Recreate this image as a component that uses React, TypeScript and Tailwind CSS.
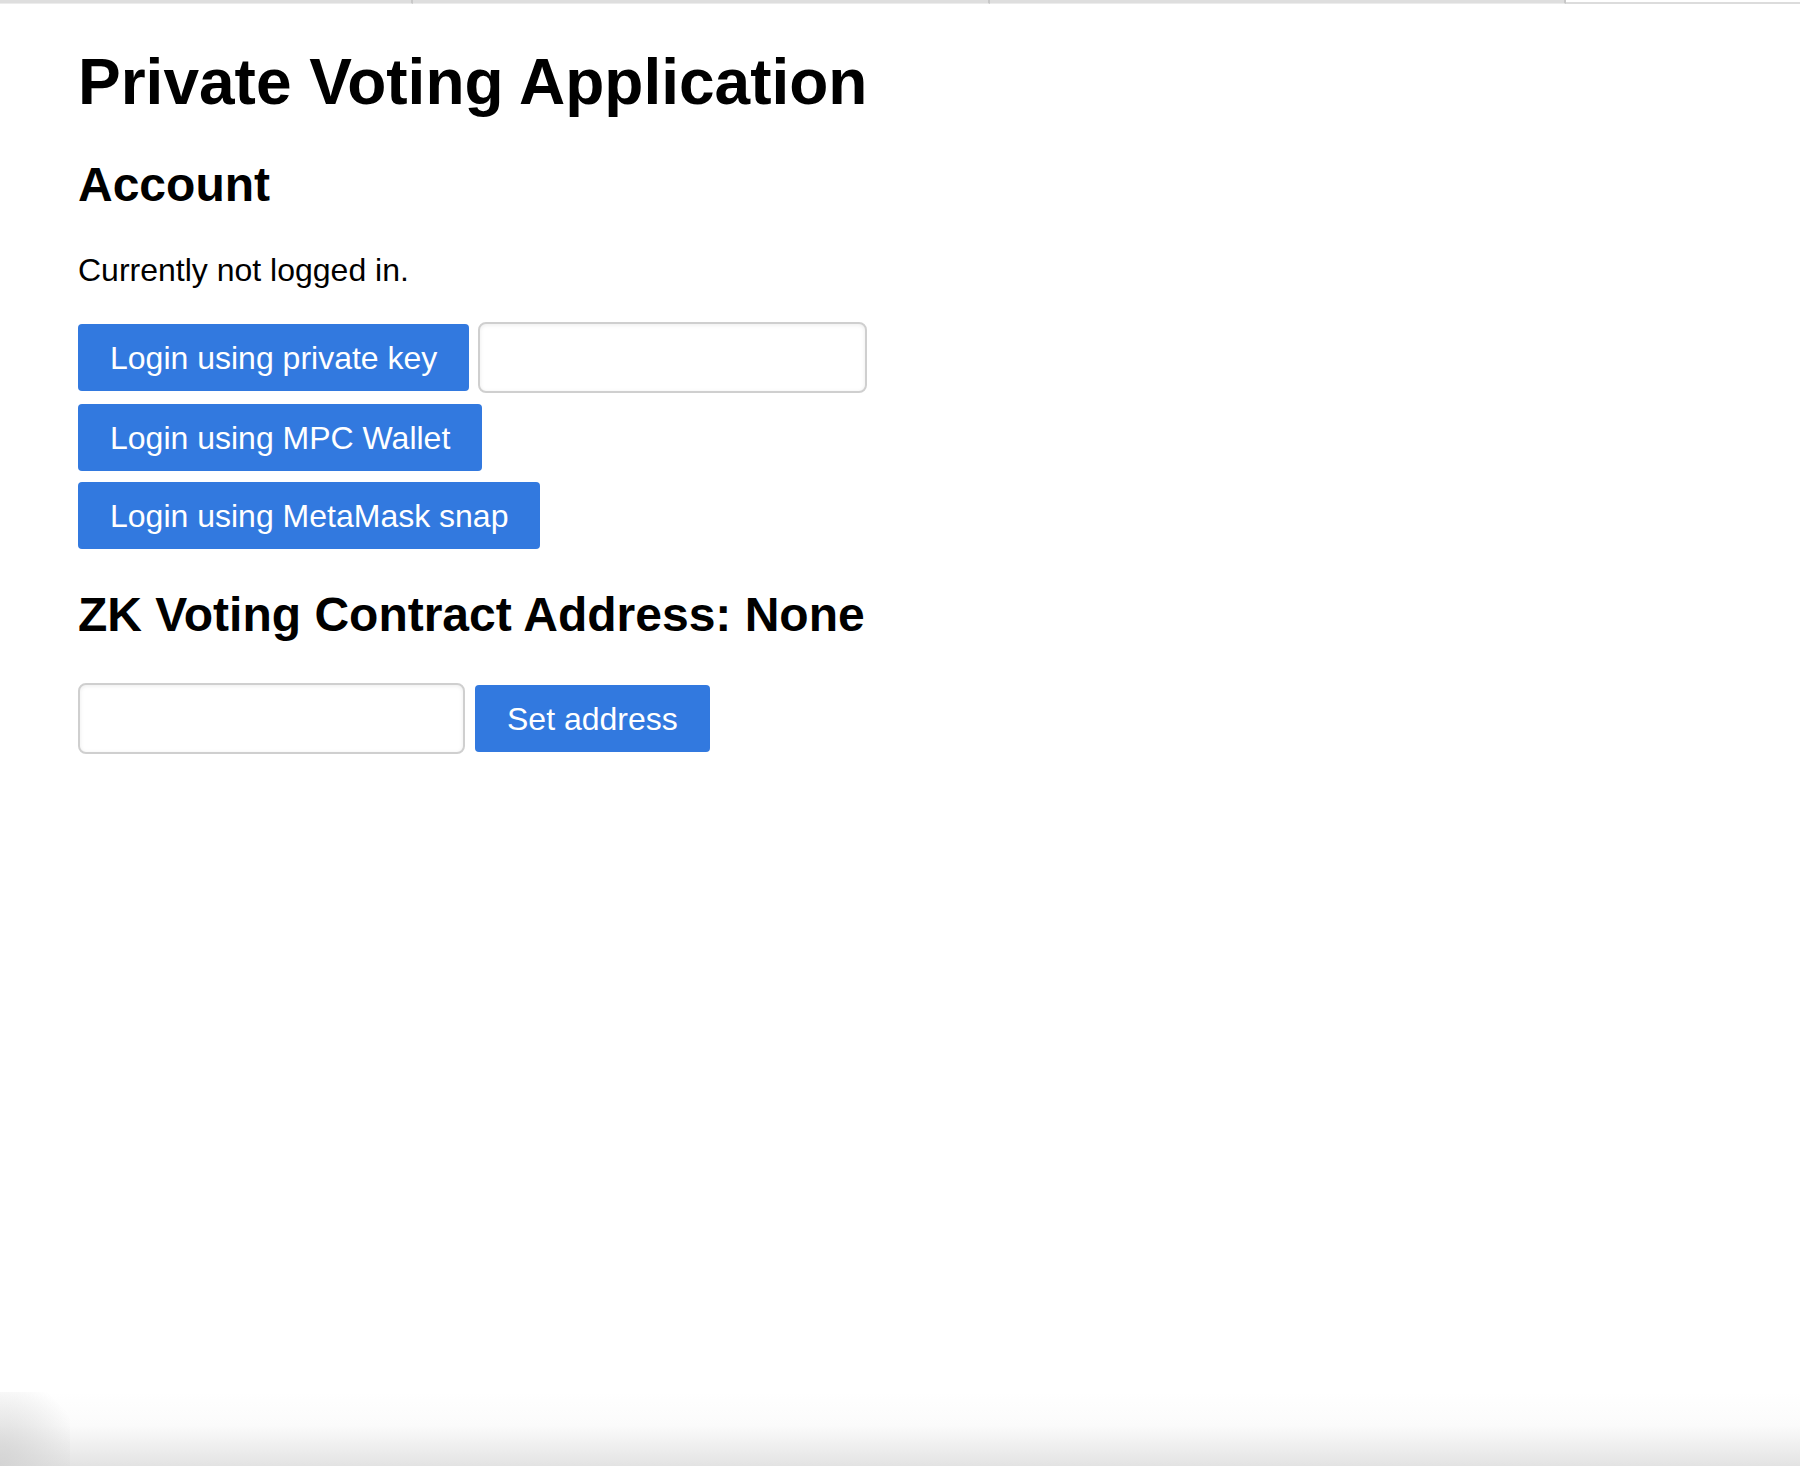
import { useState } from "react";

export default function App() {
  const [key, setKey] = useState("");
  const [addr, setAddr] = useState("");

  const btn =
    "h-[67px] px-[32px] rounded-[4px] bg-[#3279df] text-white text-[32px] leading-none whitespace-nowrap";
  const field =
    "h-[71px] rounded-[8px] border-2 border-[#cfcfcf] bg-white px-3 text-[32px] shadow-[inset_0_1px_4px_rgba(0,0,0,0.08)] outline-none";

  return (
    <div className="relative flex flex-col h-[1466px] w-full bg-white text-black font-['Liberation_Sans',Arial,sans-serif] overflow-hidden">
      {/* tab strip leftovers */}
      <div className="flex h-[4px] shrink-0">
        <div className="w-[413px] bg-[#dedede] border-r-2 border-[#c8c8c8] border-b border-b-[#ececec]" />
        <div className="w-[577px] bg-[#dedede] border-r-2 border-[#c8c8c8] border-b border-b-[#ececec]" />
        <div className="w-[576px] bg-[#dedede] border-r-2 border-[#c8c8c8] border-b border-b-[#ececec]" />
        <div className="flex-1 bg-white border-b-2 border-[#dcdcdc]" />
      </div>

      <main className="pl-[78px] flex flex-col">
        <h1 className="mt-[30px] text-[64px] font-bold">Private Voting Application</h1>

        <h2 className="mt-[19px] text-[48px] font-bold">Account</h2>
        <p className="mt-[25px] text-[32px]">Currently not logged in.</p>

        <div className="mt-[28px] flex flex-col gap-[11px] items-start">
          <div className="flex items-center gap-[9px]">
            <button className={btn}>Login using private key</button>
            <input
              className={`${field} w-[389px]`}
              value={key}
              onChange={(e) => setKey(e.target.value)}
            />
          </div>
          <button className={btn}>Login using MPC Wallet</button>
          <button className={btn}>Login using MetaMask snap</button>
        </div>

        <h2 className="mt-[30px] text-[48px] font-bold">ZK Voting Contract Address: None</h2>

        <div className="mt-[32px] flex items-center gap-[10px]">
          <input
            className={`${field} w-[387px]`}
            value={addr}
            onChange={(e) => setAddr(e.target.value)}
          />
          <button className={btn}>Set address</button>
        </div>
      </main>

      <div className="flex-1" />

      {/* window shadow at the bottom */}
      <div className="relative h-[74px] shrink-0 bg-[linear-gradient(to_bottom,#ffffff,#fbfbfb_45%,#e3e3e3)]">
        <div className="absolute left-0 bottom-0 h-[74px] w-[70px] bg-[radial-gradient(ellipse_at_bottom_left,#d4d4d4,rgba(255,255,255,0)_85%)]" />
      </div>
    </div>
  );
}
